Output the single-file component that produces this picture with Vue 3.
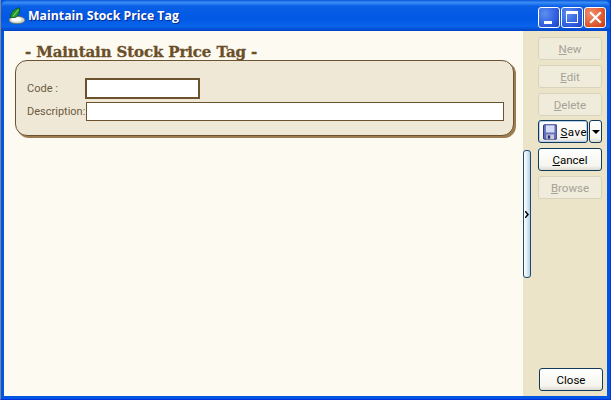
<script setup>
const buttons = [
  { label: 'New', key: 'N', rest: 'ew' },
  { label: 'Edit', key: 'E', rest: 'dit' },
  { label: 'Delete', key: 'D', rest: 'elete' },
];
</script>

<template>
  <div class="window">
    <div class="titlebar">
      <svg class="app-icon" width="18" height="18" viewBox="0 0 18 18">
        <ellipse cx="9" cy="13" rx="8" ry="3.8" fill="#cfd6d0" stroke="#4f6250" stroke-width="0.7" />
        <ellipse cx="8.5" cy="12.4" rx="5" ry="2.2" fill="#ffffff" />
        <path d="M2.5 10.5 C2.5 5.5 6 2 11.5 0.8 C12 4.5 11.5 8.5 7 10.5 Z" fill="#1f9a2c" stroke="#0c4f18" stroke-width="0.8" />
        <path d="M5 9.5 L10.5 2.5" stroke="#9fe08f" stroke-width="0.9" />
      </svg>
      <span class="title">Maintain Stock Price Tag</span>
      <div class="caption-btns">
        <div class="cap blue">
          <span class="min-glyph"></span>
        </div>
        <div class="cap blue">
          <span class="max-glyph"></span>
        </div>
        <div class="cap red">
          <svg width="13" height="13" viewBox="0 0 13 13">
            <path d="M2 2 L11 11 M11 2 L2 11" stroke="#fff" stroke-width="2.2" stroke-linecap="square" />
          </svg>
        </div>
      </div>
    </div>

    <div class="client">
      <div class="content">
        <h1 class="heading">- Maintain Stock Price Tag -</h1>
        <div class="panel">
          <div class="row code-row">
            <label class="lbl code-lbl">Code :</label>
            <input class="code-input" type="text" />
          </div>
          <div class="row desc-row">
            <label class="lbl desc-lbl">Description:</label>
            <input class="desc-input" type="text" />
          </div>
        </div>
        <div class="splitter">
          <svg width="5" height="7" viewBox="0 0 5 7"><path d="M1 0 L4 3.5 L1 7 L0 7 L0 6 L2 3.5 L0 1 L0 0 Z" fill="#000" /></svg>
        </div>
      </div>

      <div class="sidebar">
        <button v-for="b in buttons" :key="b.label" class="btn disabled" type="button">
          <u>{{ b.key }}</u>{{ b.rest }}
        </button>
        <div class="save-group">
          <button class="btn save" type="button">
            <svg width="15" height="16" viewBox="0 0 15 16">
              <rect x="0.5" y="0.5" width="14" height="15" rx="1" fill="#6470bd" stroke="#2a3178" />
              <rect x="3" y="1" width="9" height="7.5" fill="#d4dbf3" />
              <rect x="3.5" y="10.5" width="8" height="5" fill="#c9cbd8" />
              <rect x="5" y="11.5" width="2.5" height="3.5" fill="#2a3178" />
            </svg>
            <span class="save-text"><u>S</u>ave</span>
          </button>
          <button class="btn drop" type="button">
            <span class="arrow"></span>
          </button>
        </div>
        <button class="btn" type="button"><u>C</u>ancel</button>
        <button class="btn disabled" type="button"><u>B</u>rowse</button>
        <div class="spacer"></div>
        <button class="btn close" type="button">Close</button>
      </div>
    </div>
  </div>
</template>

<style>
html, body {
  margin: 0;
  padding: 0;
  overflow: hidden;
}
</style>

<style scoped>
.window {
  width: 611px;
  height: 400px;
  box-sizing: border-box;
  display: flex;
  flex-direction: column;
  background: #0055e5;
  padding: 0 3px 3px;
  border-left: 1px solid #7d8794;
  border-right: 1px solid #0831d9;
  border-bottom: 1px solid #0831d9;
  font-family: Roboto, "Liberation Sans", Arial, sans-serif;
  font-size: 11px;
  overflow: hidden;
}

.titlebar {
  height: 31px;
  flex: none;
  margin: 0 -3px;
  padding: 0 4px 0 7px;
  display: flex;
  align-items: center;
  background: linear-gradient(to bottom, #0a57d8 0%, #3a8cf5 8%, #0a5fe6 20%, #0058e4 60%, #0a64ea 85%, #0042c8 100%);
  border-radius: 7px 7px 0 0;
}

.app-icon {
  flex: none;
  margin-right: 2px;
}

.title {
  color: #fff;
  font-family: "Open Sans", "Liberation Sans", sans-serif;
  font-weight: 700;
  font-size: 12.3px;
  text-shadow: 1px 1px 0 #0a2a8c;
}

.caption-btns {
  margin-left: auto;
  padding-top: 3px;
  display: flex;
  gap: 1px;
}

.cap {
  width: 22px;
  height: 21px;
  box-sizing: border-box;
  border: 1px solid #fff;
  border-radius: 3px;
  display: flex;
  align-items: center;
  justify-content: center;
  position: relative;
}

.cap.blue {
  background: radial-gradient(circle at 30% 30%, #5d8ff0 0%, #2e5fe0 60%, #1c3fc0 100%);
}

.cap.red {
  background: radial-gradient(circle at 30% 30%, #f09070 0%, #df5a30 60%, #c43a14 100%);
}

.min-glyph {
  position: absolute;
  left: 5px;
  bottom: 3px;
  width: 8px;
  height: 3px;
  background: #fff;
}

.max-glyph {
  width: 12px;
  height: 12px;
  box-sizing: border-box;
  border: 1px solid #fff;
  border-top-width: 3px;
}

.client {
  flex: 1;
  display: flex;
  min-height: 0;
  background: #ece4c8;
}

.content {
  position: relative;
  width: 519px;
  flex: none;
  box-sizing: border-box;
  background: #fdfaf2;
  padding: 0 8px 0 11px;
}

.heading {
  margin: 0;
  padding-left: 10px;
  height: 29px;
  line-height: 15px;
  padding-top: 14px;
  box-sizing: border-box;
  font-family: "DejaVu Serif", serif;
  font-weight: bold;
  font-size: 15px;
  letter-spacing: -0.12px;
  -webkit-text-stroke: 0.3px #6b4f28;
  color: #6b4f28;
  white-space: nowrap;
}

.panel {
  height: 76px;
  width: 499px;
  box-sizing: border-box;
  background: #f0e8d6;
  border: 1px solid #6b5330;
  border-radius: 12px;
  box-shadow: 2px 2px 0 #9c7c50;
  padding: 17px 9px 0 11px;
  color: #6a5a42;
}

.row {
  display: flex;
  align-items: center;
}

.code-row {
  height: 21px;
}

.desc-row {
  height: 19px;
  margin-top: 3px;
}

.lbl {
  white-space: nowrap;
  font-size: 11px;
}

.code-lbl {
  width: 58px;
  flex: none;
}

.desc-lbl {
  width: 59px;
  flex: none;
}

input {
  box-sizing: border-box;
  background: #fff;
  outline: none;
  padding: 0;
  margin: 0;
  flex: none;
}

.code-input {
  width: 115px;
  height: 21px;
  border: 2px solid #6b5330;
}

.desc-input {
  width: 418px;
  height: 19px;
  border: 1px solid #6b5330;
}

.splitter {
  position: absolute;
  left: 519px;
  top: 119px;
  width: 8px;
  height: 128px;
  box-sizing: border-box;
  border: 1px solid #1c4a70;
  border-radius: 3px;
  background: linear-gradient(to right, #ffffff 0%, #e4f0f8 40%, #b8d0e4 100%);
  display: flex;
  align-items: center;
  justify-content: center;
}

.sidebar {
  flex: 1;
  display: flex;
  flex-direction: column;
  align-items: flex-start;
  padding: 6px 0 5px 15px;
  box-sizing: border-box;
}

.btn {
  width: 64px;
  height: 23px;
  flex: none;
  margin: 0 0 5px;
  padding: 0;
  box-sizing: border-box;
  border: 1px solid #0f3a5c;
  border-radius: 3px;
  background: linear-gradient(to bottom, #ffffff 0%, #f6f5ee 80%, #dedbd0 100%);
  font-family: Roboto, "Liberation Sans", Arial, sans-serif;
  font-size: 11.5px;
  color: #000;
  text-align: center;
}

.btn.disabled {
  background: #f0ecdb;
  border-color: #d8d3bd;
  color: #a5a297;
}

.save-group {
  display: flex;
  gap: 1px;
  margin-top: -1px;
  margin-bottom: 5px;
}

.save-group .btn {
  margin: 0;
}

.save {
  width: 50px;
  display: flex;
  align-items: center;
  gap: 3px;
  padding-left: 4px;
  box-shadow: inset 0 0 0 1px #b8d0f0;
}

.save-text {
  letter-spacing: 0.5px;
}

.drop {
  width: 13px;
  display: flex;
  align-items: center;
  justify-content: center;
}

.arrow {
  width: 0;
  height: 0;
  border-left: 4px solid transparent;
  border-right: 4px solid transparent;
  border-top: 4px solid #000;
}

.spacer {
  flex: 1;
}

.close {
  margin: 0 0 0 1px;
  width: 64px;
}
</style>
